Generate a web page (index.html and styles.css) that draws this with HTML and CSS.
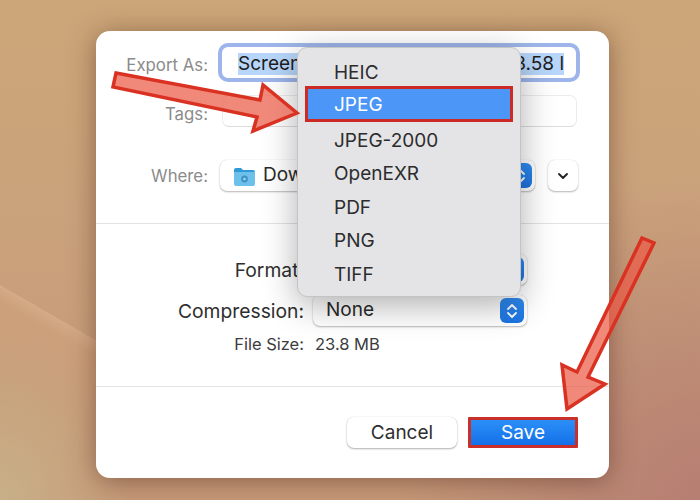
FILE: index.html
```html
<!DOCTYPE html>
<html>
<head>
    <title>Export</title>
    <link rel="stylesheet" href="styles.css">
</head>
<body>
    <div class="wedge"></div>
    <div class="dialog">
        <div class="top">
            <div class="row row-name">
                <span class="label">Export As:</span>
                <div class="name-field"><div class="selected"><span>Screen</span><span>13.58 l</span></div></div>
            </div>
            <div class="row row-tags">
                <span class="label">Tags:</span>
                <div class="tags-field"></div>
            </div>
            <div class="row row-where">
                <span class="label">Where:</span>
                <div class="popup where-popup">
                    <svg class="folder" width="23" height="22" viewBox="0 0 23 22">
                        <path d="M1 5 a2 2 0 0 1 2-2 h5 l2 2 h10 a2 2 0 0 1 2 2 v1 H1z" fill="#2f9bd6"/>
                        <path d="M1 7 h21 v12 a2 2 0 0 1-2 2 H3 a2 2 0 0 1-2-2z" fill="#6cc0ea"/>
                        <circle cx="11.5" cy="14" r="3.4" fill="#3f93c6"/>
                        <circle cx="11.5" cy="14" r="1.3" fill="#9dd6f2"/>
                    </svg>
                    <span class="popup-text">Dow</span>
                    <span class="stepper">
                        <svg width="12" height="18" viewBox="0 0 12 18"><path d="M2 7 L6 3 L10 7 M2 11 L6 15 L10 11" fill="none" stroke="#fff" stroke-width="1.8" stroke-linecap="round" stroke-linejoin="round"/></svg>
                    </span>
                </div>
                <div class="expand">
                    <svg width="12" height="8" viewBox="0 0 12 8"><path d="M2 2 L6 6 L10 2" fill="none" stroke="#222" stroke-width="1.9" stroke-linecap="round" stroke-linejoin="round"/></svg>
                </div>
            </div>
        </div>

        <div class="middle">
            <div class="row row-format">
                <span class="label label-dark">Format:</span>
                <div class="popup wide-popup">
                    <span class="popup-text"></span>
                    <span class="stepper">
                        <svg width="12" height="18" viewBox="0 0 12 18"><path d="M2 7 L6 3 L10 7 M2 11 L6 15 L10 11" fill="none" stroke="#fff" stroke-width="1.8" stroke-linecap="round" stroke-linejoin="round"/></svg>
                    </span>
                </div>
            </div>
            <div class="row row-compression">
                <span class="label label-dark">Compression:</span>
                <div class="popup wide-popup">
                    <span class="popup-text">None</span>
                    <span class="stepper">
                        <svg width="12" height="18" viewBox="0 0 12 18"><path d="M2 7 L6 3 L10 7 M2 11 L6 15 L10 11" fill="none" stroke="#fff" stroke-width="1.8" stroke-linecap="round" stroke-linejoin="round"/></svg>
                    </span>
                </div>
            </div>
            <div class="row row-size">
                <span class="label label-small">File Size:</span>
                <span class="size-value">23.8 MB</span>
            </div>
        </div>

        <div class="bottom">
            <button class="btn btn-cancel">Cancel</button>
            <button class="btn btn-save">Save</button>
        </div>

        <ul class="menu">
            <li>HEIC</li>
            <li class="active">JPEG</li>
            <li>JPEG-2000</li>
            <li>OpenEXR</li>
            <li>PDF</li>
            <li>PNG</li>
            <li>TIFF</li>
        </ul>
    </div>

    <svg class="arrows" width="700" height="500" viewBox="0 0 700 500">
        <path d="M116 73 L260 100 L263 85 L297 113 L253 131 L257 117 L113 87 Z"/>
        <path d="M642 238 L654 243 L588 377 L605 384 L567 409 L562 365 L577 372 Z"/>
    </svg>
</body>
</html>
```

FILE: styles.css
```css
html, body {
    margin: 0;
    padding: 0;
}

body {
    position: relative;
    width: 700px;
    height: 500px;
    box-sizing: border-box;
    padding: 31px 91px 22px 96px;
    overflow: hidden;
    font-family: 'Inter', 'Liberation Sans', sans-serif;
    color: #2a2a2a;
    background:
        radial-gradient(ellipse 130px 170px at 0 500px, #c8b088 0%, rgba(200, 176, 136, 0) 100%),
        radial-gradient(ellipse 300px 320px at 700px 500px, #b67e72 0%, rgba(182, 126, 114, 0) 100%),
        linear-gradient(180deg, #cca678 0%, #caa27b 40%, #c69a78 100%);
}

.wedge {
    position: absolute;
    left: 0;
    top: 285px;
    width: 96px;
    height: 215px;
    background:
        linear-gradient(210deg, transparent 48px, rgba(240, 200, 165, 0.3) 48px, rgba(214, 165, 125, 0.25) 62px, transparent 130px);
    clip-path: polygon(0 0, 100% 55px, 100% 100%, 0 100%);
}

.dialog {
    position: relative;
    box-sizing: border-box;
    width: 513px;
    height: 447px;
    background: #fff;
    border-radius: 14px;
    box-shadow: 0 3px 26px rgba(80, 40, 30, 0.5);
    display: flex;
    flex-direction: column;
}

.top {
    height: 193px;
    padding-top: 12px;
    box-sizing: border-box;
    border-bottom: 1px solid #e3e3e3;
}

.middle {
    height: 163px;
    padding-top: 30px;
    box-sizing: border-box;
    border-bottom: 1px solid #e3e3e3;
}

.row {
    display: flex;
    align-items: center;
}

.label {
    width: 112px;
    flex: none;
    text-align: right;
    font-size: 16.8px;
    color: #8b8b8b;
    margin-right: 12px;
}

.row-name .label, .row-tags .label {
    margin-top: 5px;
}

.row-format .label, .row-compression .label, .row-size .label {
    width: 208px;
    margin-right: 9px;
}

.label-dark {
    font-size: 19.3px;
    color: #2e2e2e;
}

.row-size .label-small {
    font-size: 16.5px;
    color: #3c3c3c;
    margin-right: 11px;
}

.size-value {
    font-size: 16.5px;
    color: #3c3c3c;
}

.name-field {
    width: 362px;
    height: 39px;
    box-sizing: border-box;
    margin-left: -2px;
    border: 4px solid #9db5ea;
    border-radius: 10px;
    padding: 6px 12px 3px 16px;
}

.selected {
    display: flex;
    justify-content: space-between;
    height: 22px;
    line-height: 22px;
    background: #b7d6fa;
    font-size: 19px;
    color: #1d1d1d;
    overflow: hidden;
    white-space: nowrap;
}

.row-tags {
    margin-top: 13px;
}

.tags-field {
    width: 355px;
    height: 32px;
    margin-left: 2px;
    box-sizing: border-box;
    border: 1px solid #ececec;
    border-bottom-color: #dcdcdc;
    border-radius: 7px;
}

.row-where {
    margin-top: 33px;
}

.popup {
    box-sizing: border-box;
    display: flex;
    align-items: center;
    height: 31px;
    background: #fff;
    border-radius: 7px;
    box-shadow: 0 1px 2px rgba(0, 0, 0, 0.28), 0 0 1px rgba(0, 0, 0, 0.18);
    font-size: 19px;
}

.where-popup {
    width: 315px;
    padding-left: 13px;
}

.wide-popup {
    width: 214px;
    padding-left: 13px;
}

.folder {
    margin-right: 7px;
}

.popup-text {
    flex: 1;
    margin-top: -2px;
}

.stepper {
    width: 24px;
    height: 25px;
    margin-right: 3px;
    border-radius: 6px;
    background: linear-gradient(180deg, #2f8cf4, #1c74e0);
    display: flex;
    align-items: center;
    justify-content: center;
}

.expand {
    width: 30px;
    height: 31px;
    margin-left: 13px;
    background: #fff;
    border-radius: 7px;
    box-shadow: 0 1px 2px rgba(0, 0, 0, 0.28), 0 0 1px rgba(0, 0, 0, 0.18);
    display: flex;
    align-items: center;
    justify-content: center;
}

.row-compression {
    margin-top: 10px;
}

.row-size {
    margin-top: 8px;
}

.bottom {
    flex: 1;
    display: flex;
    justify-content: flex-end;
    align-items: flex-start;
    gap: 11px;
    padding: 30px 31px 0 0;
}

.btn {
    box-sizing: border-box;
    font-family: inherit;
    font-size: 19px;
    padding: 0;
    height: 31px;
    border: 0;
    border-radius: 7px;
}

.btn-cancel {
    width: 110px;
    background: #fff;
    color: #2e2e2e;
    box-shadow: 0 1px 2px rgba(0, 0, 0, 0.3), 0 0 1px rgba(0, 0, 0, 0.2);
}

.btn-save {
    width: 110px;
    height: 31px;
    border: 3px solid #c9302a;
    border-radius: 1px;
    color: #fff;
    background: linear-gradient(180deg, #2b8ff8, #1470e8);
}

.menu {
    position: absolute;
    left: 201px;
    top: 16px;
    width: 224px;
    height: 250px;
    box-sizing: border-box;
    margin: 0;
    padding: 8px;
    list-style: none;
    background: #e4e4e6;
    border: 1px solid #c4c4c6;
    border-radius: 10px;
    box-shadow: 0 8px 34px rgba(0, 0, 0, 0.32);
    font-size: 19px;
    color: #2c2c2e;
}

.menu li {
    box-sizing: border-box;
    height: 33.6px;
    line-height: 33.6px;
    padding-left: 28px;
}

.menu li.active {
    margin: -3.6px 0 1.5px -1px;
    width: 208px;
    height: 36px;
    line-height: 32px;
    padding-left: 26px;
    border: 3px solid #cc2a24;
    background: #4c96f7;
    color: #fff;
}

.arrows {
    position: absolute;
    left: 0;
    top: 0;
}

.arrows path {
    fill: rgba(236, 92, 72, 0.72);
    stroke: #d93222;
    stroke-width: 3.5;
    stroke-linejoin: miter;
}
```
